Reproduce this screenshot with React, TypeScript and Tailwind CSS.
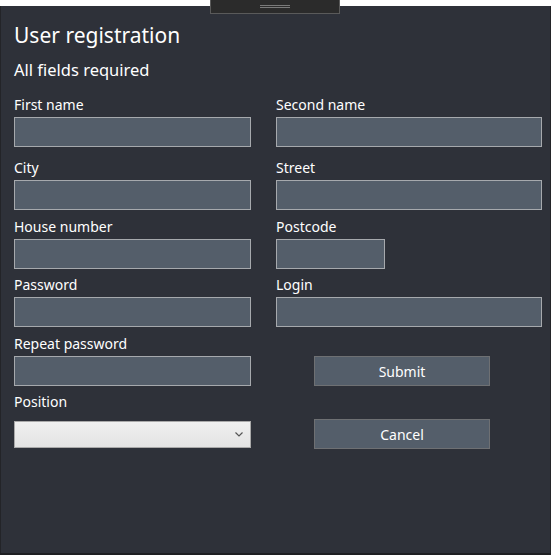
import React from 'react';

const font = { fontFamily: '"Noto Sans", "Open Sans", Arial, sans-serif' };

function Field({ label, width, mt }: { label: string; width?: string; mt?: string }) {
  return (
    <div className={`flex flex-col ${mt ?? ''}`}>
      <label className="block text-[14px] leading-[20px] text-white">{label}</label>
      <input
        type="text"
        className={`mt-[2px] h-[30px] ${width ?? 'w-full'} border border-[#a6a9ad] bg-[#545e6a] outline-none`}
      />
    </div>
  );
}

export default function App() {
  return (
    <div className="relative h-[555px] w-[551px] overflow-hidden bg-[#2e3139]" style={font}>
      {/* window chrome */}
      <div className="h-[6px] w-full bg-white" />
      <div className="absolute left-[210px] top-0 flex h-[14px] w-[130px] items-center justify-center border-x border-b border-[#5a5a5a] bg-[#2b2b2b]">
        <div className="flex flex-col gap-[1px]">
          <div className="h-[1px] w-[30px] bg-[#7a7a7a]" />
          <div className="h-[1px] w-[30px] bg-[#7a7a7a]" />
        </div>
      </div>

      <div className="flex h-[547px] flex-col border-l border-r border-[#232428] pl-[13px] pr-[8px]">
        <h1 className="mt-[14px] text-[21px] leading-[30px] text-white">User registration</h1>
        <p className="mt-[8px] text-[16.5px] leading-[24px] text-white">All fields required</p>

        <div className="mt-[13px] grid grid-cols-[237px_266px] gap-x-[25px]">
          <Field label="First name" />
          <Field label="Second name" />
          <Field label="City" mt="mt-[11px]" />
          <Field label="Street" mt="mt-[11px]" />
          <Field label="House number" mt="mt-[7px]" />
          <Field label="Postcode" width="w-[109px]" mt="mt-[7px]" />
          <Field label="Password" mt="mt-[6px]" />
          <Field label="Login" mt="mt-[6px]" />
          <Field label="Repeat password" mt="mt-[7px]" />
          <div className="mt-[7px] pt-[22px]">
            <button className="ml-[38px] h-[30px] w-[176px] border border-[#6e7073] bg-[#545e6a] text-[14px] text-white">
              Submit
            </button>
          </div>
          <div className="mt-[6px] flex flex-col">
            <label className="block text-[14px] leading-[20px] text-white">Position</label>
            <div className="relative mt-[9px] h-[27px] w-full border border-[#a9a9a9] bg-gradient-to-b from-[#f0f0f0] to-[#e3e3e3]">
              <select className="h-full w-full appearance-none bg-transparent outline-none" />
              <svg className="pointer-events-none absolute right-[7px] top-[10px]" width="8" height="5" viewBox="0 0 8 5">
                <path d="M0.5 0.5 L4 4 L7.5 0.5" fill="none" stroke="#555" strokeWidth="1.2" />
              </svg>
            </div>
          </div>
          <div className="mt-[6px] pt-[27px]">
            <button className="ml-[38px] h-[30px] w-[176px] border border-[#6e7073] bg-[#545e6a] text-[14px] text-white">
              Cancel
            </button>
          </div>
        </div>
      </div>
      <div className="h-[2px] w-full bg-[#1e1f22]" />
    </div>
  );
}
